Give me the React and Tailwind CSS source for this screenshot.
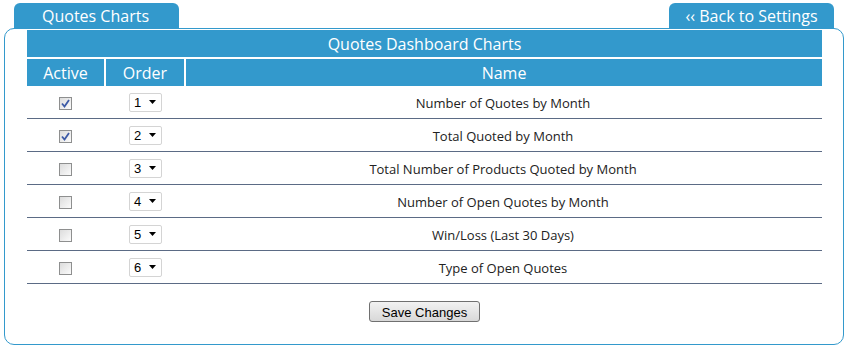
import React from 'react';

const charts = [
  { order: 1, name: 'Number of Quotes by Month', active: true },
  { order: 2, name: 'Total Quoted by Month', active: true },
  { order: 3, name: 'Total Number of Products Quoted by Month', active: false },
  { order: 4, name: 'Number of Open Quotes by Month', active: false },
  { order: 5, name: 'Win/Loss (Last 30 Days)', active: false },
  { order: 6, name: 'Type of Open Quotes', active: false },
];

const Checkbox = ({ checked }) => (
  <div className="w-[13px] h-[13px] border border-[#8e8f8f] bg-gradient-to-br from-[#dcdcdc] to-[#fbfbfb] flex items-center justify-center">
    {checked && (
      <svg width="9" height="9" viewBox="0 0 9 9">
        <path d="M1 4.5 L3.5 7.5 L8 1" fill="none" stroke="#3c5aa6" strokeWidth="1.8" />
      </svg>
    )}
  </div>
);

const OrderSelect = ({ value }) => (
  <div className="w-[33px] h-[19px] border border-[#d4d4d4] rounded-[2px] bg-white flex items-center justify-between pl-[4px] pr-[5px] font-['Liberation_Sans',sans-serif] text-[13px] text-black leading-none">
    <span>{value}</span>
    <svg width="7" height="4" viewBox="0 0 7 4">
      <path d="M0 0 H7 L3.5 4 Z" fill="#000" />
    </svg>
  </div>
);

const App = () => {
  return (
    <div className="w-[849px] h-[349px] bg-white pt-[3px] pl-[4px] pr-[5px] font-['Open_Sans',sans-serif]">
      <div className="flex justify-between pl-[10px] pr-[10px] relative z-10">
        <div className="w-[165px] h-[26px] bg-[#3399cc] rounded-t-[6px] text-white text-[16px] leading-[26px] text-center pr-[2px]">
          Quotes Charts
        </div>
        <div className="w-[165px] h-[26px] bg-[#3399cc] rounded-t-[6px] text-white text-[16px] leading-[26px] text-center">
          ‹‹ Back to Settings
        </div>
      </div>
      <div className="-mt-px h-[317px] border border-[#3399cc] rounded-[10px] pt-px pl-[22px] pr-[21px] flex flex-col">
        <div className="h-[27px] bg-[#3399cc] text-white text-[16px] flex items-center justify-center">
          Quotes Dashboard Charts
        </div>
        <div className="mt-[2px] h-[27px] flex gap-[2px] text-white text-[16px]">
          <div className="w-[77px] bg-[#3399cc] flex items-center justify-center">Active</div>
          <div className="w-[78px] bg-[#3399cc] flex items-center justify-center">Order</div>
          <div className="flex-1 bg-[#3399cc] flex items-center justify-center">Name</div>
        </div>
        {charts.map((c) => (
          <div key={c.order} className="h-[33px] border-b border-[#5b6b85] flex items-center text-[13px] text-[#222]">
            <div className="w-[77px] flex justify-center pt-[3px]">
              <Checkbox checked={c.active} />
            </div>
            <div className="w-[80px] flex justify-center pl-[3px]">
              <OrderSelect value={c.order} />
            </div>
            <div className="flex-1 text-center pt-[3px]">{c.name}</div>
          </div>
        ))}
        <div className="flex justify-center mt-[17px]">
          <button className="w-[111px] h-[21px] border border-[#707070] rounded-[3px] bg-gradient-to-b from-[#f2f2f2] to-[#d8d8d8] font-['Liberation_Sans',sans-serif] text-[13px] text-black leading-none pt-px">
            Save Changes
          </button>
        </div>
      </div>
    </div>
  );
};

export default App;
